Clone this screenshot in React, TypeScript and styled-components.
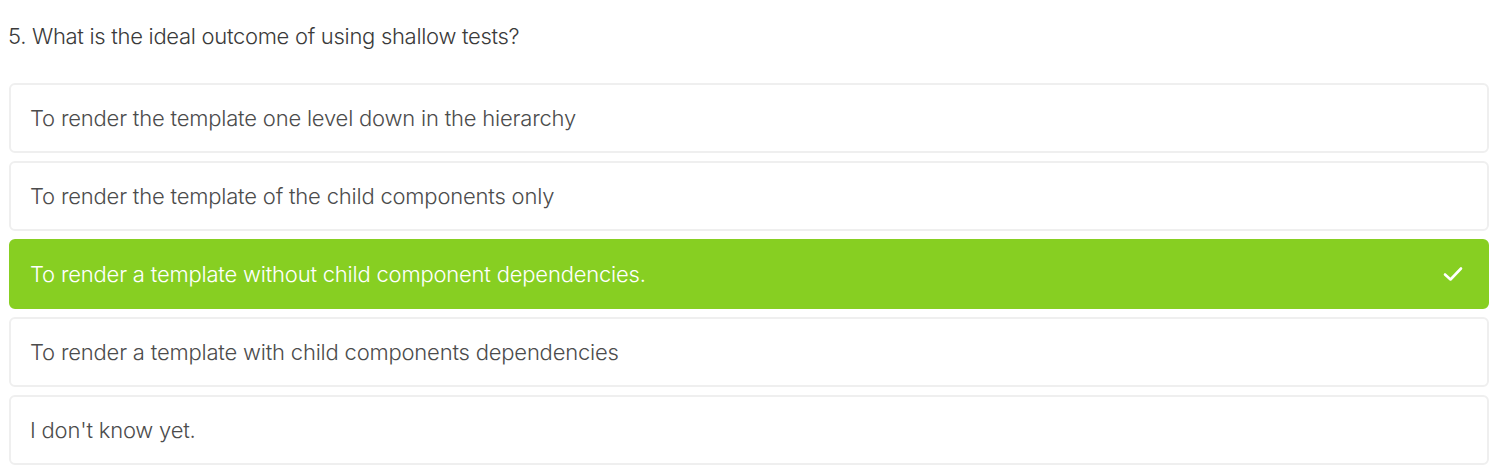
import React from "react";
import styled, { createGlobalStyle } from "styled-components";

const Global = createGlobalStyle`
  html, body { margin: 0; padding: 0; background: #ffffff; overflow: hidden; }
  body { font-family: "Inter", "Liberation Sans", sans-serif; }
`;

const Page = styled.div`
  padding: 22px 2px 0 8px;
`;

const Question = styled.div`
  font-size: 22px;
  font-weight: 300;
  color: #3a3a3a;
  line-height: 28px;
  letter-spacing: -0.3px;
  margin-bottom: 33px;
`;

const List = styled.ul`
  list-style: none;
  margin: 0 0 0 1px;
  padding: 0;
  display: flex;
  flex-direction: column;
  gap: 8px;
`;

const Option = styled.li<{ $selected?: boolean }>`
  box-sizing: border-box;
  height: 70px;
  display: flex;
  align-items: center;
  justify-content: space-between;
  padding: 0 24px 0 19px;
  border-radius: 6px;
  border: 2px solid ${(p) => (p.$selected ? "#87cf22" : "#efefef")};
  background: ${(p) => (p.$selected ? "#87cf22" : "#ffffff")};
  color: ${(p) => (p.$selected ? "#ffffff" : "#4c4c4c")};
  font-size: 22px;
  font-weight: 300;
  letter-spacing: -0.2px;
`;

const Label = styled.span`
  line-height: 28px;
`;

const Check = () => (
  <svg width="20" height="16" viewBox="0 0 20 16" fill="none">
    <path d="M2 8.5 L7.5 13.5 L18 2.5" stroke="#ffffff" strokeWidth="2.6" strokeLinecap="round" strokeLinejoin="round" />
  </svg>
);

const options = [
  "To render the template one level down in the hierarchy",
  "To render the template of the child components only",
  "To render a template without child component dependencies.",
  "To render a template with child components dependencies",
  "I don't know yet.",
];

export default function App() {
  return (
    <>
      <Global />
      <Page>
        <Question>5. What is the ideal outcome of using shallow tests?</Question>
        <List>
          {options.map((o, i) => (
            <Option key={i} $selected={i === 2}>
              <Label>{o}</Label>
              {i === 2 && <Check />}
            </Option>
          ))}
        </List>
      </Page>
    </>
  );
}
